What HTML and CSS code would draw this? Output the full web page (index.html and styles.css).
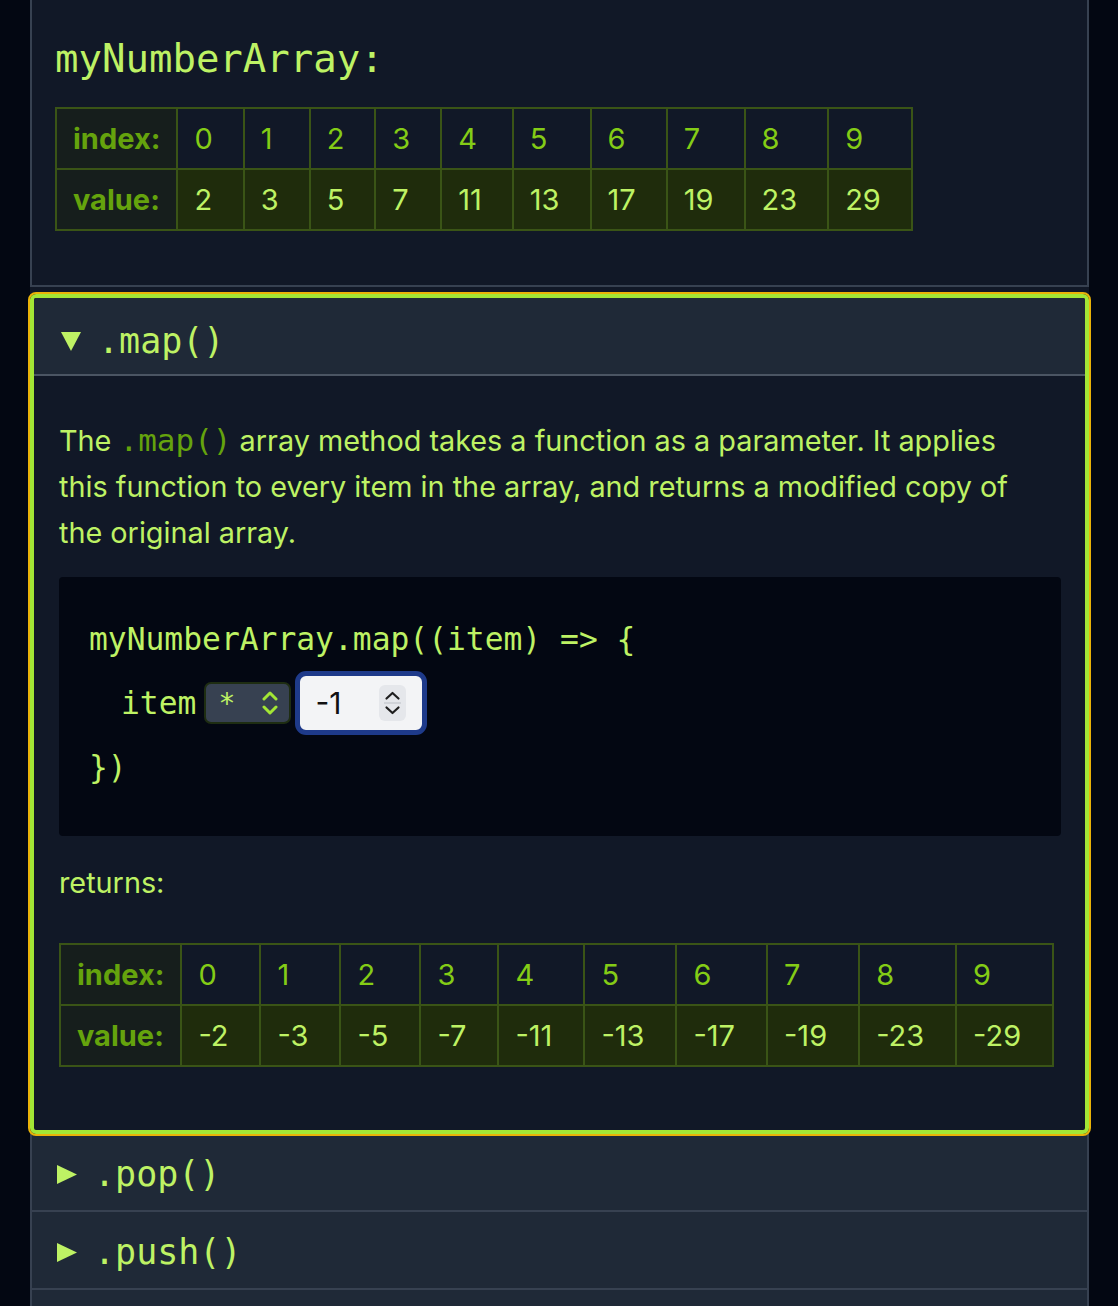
FILE: index.html
```html
<!DOCTYPE html>
<html lang="en">
<head>
<meta charset="utf-8">
<title>Array methods</title>
<link rel="stylesheet" href="styles.css">
</head>
<body>
<main class="panel">
  <section class="array-view">
    <h2 class="array-name">myNumberArray:</h2>
    <table class="arr">
      <tr class="idx"><th>index:</th><td>0</td><td>1</td><td>2</td><td>3</td><td>4</td><td>5</td><td>6</td><td>7</td><td>8</td><td>9</td></tr>
      <tr class="val"><th>value:</th><td>2</td><td>3</td><td>5</td><td>7</td><td>11</td><td>13</td><td>17</td><td>19</td><td>23</td><td>29</td></tr>
    </table>
  </section>

  <details class="method active" open>
    <summary>
      <svg class="tri" width="20" height="19" viewBox="0 0 20 19" aria-hidden="true"><path d="M0 0H20L10 19Z"/></svg>
      <span class="mname">.map()</span>
    </summary>
    <div class="method-body">
      <p class="desc">The <code>.map()</code> array method takes a function as a parameter. It applies this function to every item in the array, and returns a modified copy of the original array.</p>
      <div class="code">
        <div class="line">myNumberArray.map((item) =&gt; {</div>
        <div class="line indent">
          <span>item</span>
          <label class="op">
            <select aria-label="operator"><option>*</option><option>+</option><option>-</option><option>/</option></select>
            <svg width="16" height="28" viewBox="0 0 16 28" aria-hidden="true"><path d="M2 10L8 4L14 10M2 18L8 24L14 18"/></svg>
          </label>
          <label class="num">
            <input type="text" value="-1" aria-label="operand">
            <span class="spin">
              <svg width="27" height="36" viewBox="0 0 27 36" aria-hidden="true"><path class="sep" d="M5 18H22"/><path class="chev" d="M7.5 13.5L13.5 8L19.5 13.5M7.5 22.5L13.5 28L19.5 22.5"/></svg>
            </span>
          </label>
        </div>
        <div class="line">})</div>
      </div>
      <p class="returns">returns:</p>
      <table class="arr result">
        <tr class="idx"><th>index:</th><td>0</td><td>1</td><td>2</td><td>3</td><td>4</td><td>5</td><td>6</td><td>7</td><td>8</td><td>9</td></tr>
        <tr class="val"><th>value:</th><td>-2</td><td>-3</td><td>-5</td><td>-7</td><td>-11</td><td>-13</td><td>-17</td><td>-19</td><td>-23</td><td>-29</td></tr>
      </table>
    </div>
  </details>

  <details class="method">
    <summary>
      <svg class="tri" width="20" height="19" viewBox="0 0 20 19" aria-hidden="true"><path d="M0 0L20 9.5L0 19Z"/></svg>
      <span class="mname">.pop()</span>
    </summary>
  </details>
  <details class="method">
    <summary>
      <svg class="tri" width="20" height="19" viewBox="0 0 20 19" aria-hidden="true"><path d="M0 0L20 9.5L0 19Z"/></svg>
      <span class="mname">.push()</span>
    </summary>
  </details>
  <details class="method">
    <summary>
      <svg class="tri" width="20" height="19" viewBox="0 0 20 19" aria-hidden="true"><path d="M0 0L20 9.5L0 19Z"/></svg>
      <span class="mname">.shift()</span>
    </summary>
  </details>
</main>
</body>
</html>
```

FILE: styles.css
```css
* { box-sizing: border-box; }

html, body {
  margin: 0;
  padding: 0;
}

body {
  background: #030712;
  color: #bef264;
  font-family: Inter, "Noto Sans", sans-serif;
}

.panel {
  margin: 0 29px 0 30px;
  background: #111827;
}

/* top array view */
.array-view {
  border: 2px solid #374151;
  border-top: 0;
  padding: 35px 23px 54px;
}

.array-name {
  margin: 0 0 25px;
  font-family: "DejaVu Sans Mono", monospace;
  font-weight: 400;
  font-size: 39px;
  line-height: 47px;
  color: #bef264;
}

/* array tables */
.arr {
  border-collapse: collapse;
  border: 2px solid #3a5416;
  font-family: Inter, "Noto Sans", sans-serif;
  font-size: 29px;
  line-height: 1;
}

.arr th,
.arr td {
  border: 2px solid #3a5416;
  height: 61px;
  padding: 0 30px 0 16px;
  text-align: left;
  white-space: nowrap;
}

.arr th {
  padding: 0 16px;
  font-weight: 700;
  color: #65a30d;
  background: #161e1c;
}

.arr .idx td {
  color: #84cc16;
}

.arr .val td {
  color: #bef264;
  background: #1f2c0c;
}

.result td {
  padding-right: 31px;
}

/* method accordions */
.method {
  border: 2px solid #374151;
  border-top: 0;
  background: #1f2937;
}

.method summary {
  display: flex;
  align-items: center;
  gap: 17px;
  height: 76px;
  padding: 4px 25px 0;
  list-style: none;
  cursor: pointer;
  font-family: "DejaVu Sans Mono", monospace;
  font-size: 35px;
  color: #bef264;
}

.method summary::-webkit-details-marker { display: none; }

.tri { fill: #bef264; flex: none; }

.mname { line-height: 1; }

.method.active {
  margin-top: 7px;
  border: 4px solid #a3e635;
  border-radius: 6px;
  outline: 2px solid #eab308;
  background: #111827;
}

.method.active summary {
  height: 78px;
  padding-top: 10px;
  padding-left: 27px;
  background: #1f2937;
  border-bottom: 2px solid #4b5563;
  border-radius: 2px 2px 0 0;
}

.method-body {
  padding: 41px 24px 63px 25px;
}

.desc {
  margin: 0;
  max-width: 975px;
  font-size: 28.8px;
  line-height: 46px;
  color: #bef264;
}

.desc code {
  font-family: "DejaVu Sans Mono", monospace;
  font-size: 31px;
  color: #65a30d;
}

/* code block */
.code {
  margin-top: 21px;
  background: #030712;
  border-radius: 4px;
  padding: 30px 30px 37px;
  font-family: "DejaVu Sans Mono", monospace;
  font-size: 31.3px;
  color: #bef264;
}

.line {
  display: flex;
  align-items: center;
  min-height: 64px;
  white-space: pre;
}

.line.indent {
  padding-left: 32px;
}

.op {
  display: inline-flex;
  align-items: center;
  justify-content: space-between;
  width: 87px;
  height: 42px;
  margin-left: 8px;
  padding: 0 11px 0 12px;
  background: #374151;
  border: 2px solid #1e2d12;
  border-radius: 7px;
}

.op select {
  appearance: none;
  -webkit-appearance: none;
  border: 0;
  background: transparent;
  color: #bef264;
  font-family: "DejaVu Sans Mono", monospace;
  font-size: 28px;
  padding: 0;
  margin: 0;
  width: 30px;
  height: 38px;
  outline: none;
}

.op svg path {
  fill: none;
  stroke: #a3e635;
  stroke-width: 3;
  stroke-linecap: round;
  stroke-linejoin: round;
}

.num {
  display: inline-flex;
  align-items: center;
  justify-content: space-between;
  width: 132px;
  height: 64px;
  margin-left: 4px;
  padding: 0 16px 0 15px;
  background: #f3f4f6;
  border: 5px solid #1e3a8a;
  border-radius: 11px;
}

.num input {
  border: 0;
  background: transparent;
  outline: none;
  padding: 0;
  margin: 0;
  width: 50px;
  font-family: Inter, "Noto Sans", sans-serif;
  font-size: 30px;
  color: #111111;
}

.spin {
  display: flex;
  width: 27px;
  height: 36px;
  background: #e5e7eb;
  border-radius: 6px;
}

.spin .sep {
  stroke: #c9ccd2;
  stroke-width: 1.5;
}

.spin .chev {
  fill: none;
  stroke: #1f1f1f;
  stroke-width: 2.2;
  stroke-linecap: round;
  stroke-linejoin: round;
}

.returns {
  margin: 24px 0 37px;
  font-size: 28.8px;
  line-height: 46px;
  color: #bef264;
}
```
